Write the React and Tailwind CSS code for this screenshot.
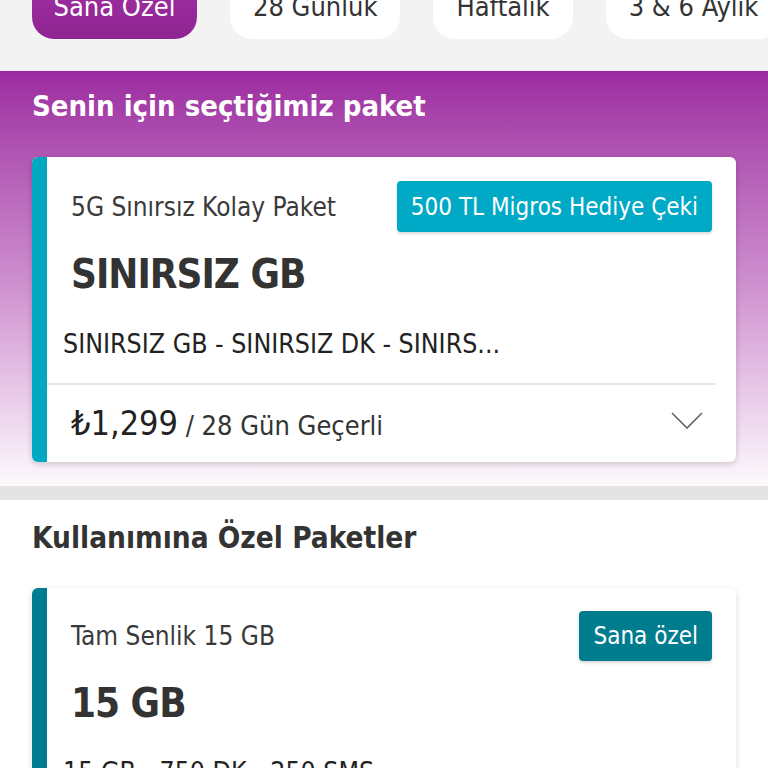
const tabs = ['Sana Özel', '28 Günlük', 'Haftalık', '3 & 6 Aylık'];

function Chevron() {
  return (
    <svg className="mb-[12px]" width="34" height="20" viewBox="0 0 34 20" fill="none" stroke="#666" strokeWidth="1.6">
      <polyline points="2,2 17,17 32,2" />
    </svg>
  );
}

export default function App() {
  return (
    <div className="w-full bg-white text-[#333]" style={{ fontFamily: '"DejaVu Sans Condensed", "Liberation Sans", sans-serif' }}>
      {/* tabs */}
      <div className="h-[71px] overflow-hidden border-b border-[#ebe9f2] bg-[#f3f3f3]">
        <div className="-mt-[24px] flex gap-[33px] pl-[32px] whitespace-nowrap">
          {tabs.map((t, i) => (
            <div
              key={t}
              className={
                i === 0
                  ? 'flex h-[63px] w-[165px] shrink-0 items-center justify-center rounded-[22px] bg-gradient-to-b from-[#a12ea3] to-[#8e2591] text-[27px] text-white'
                  : 'flex h-[63px] shrink-0 items-center justify-center rounded-[22px] bg-white px-[23px] text-[27px] text-[#333]'
              }
            >
              {t}
            </div>
          ))}
        </div>
      </div>

      {/* recommended */}
      <section className="bg-gradient-to-b from-[#9c2aa0] via-[#cd8dce] to-[#fdfafd] px-[32px] pb-[24px] pt-[15px]">
        <h1 className="text-[29px] font-bold leading-[40px] text-white">Senin için seçtiğimiz paket</h1>
        <div className="mt-[31px] flex h-[305px] overflow-hidden rounded-[6px] bg-white shadow-[0_2px_6px_rgba(0,0,0,0.18)]">
          <div className="w-[15px] shrink-0 bg-[#00a8c2]" />
          <div className="flex flex-1 flex-col">
            <div className="flex items-start justify-between pl-[24px] pr-[24px] pt-[24px]">
              <span className="mt-[11px] text-[26px] leading-[30px] text-[#3a3a3a]">5G Sınırsız Kolay Paket</span>
              <span className="flex h-[51px] items-center rounded-[4px] bg-[#00a9c6] px-[14px] text-[24px] text-white shadow-[0_2px_3px_rgba(0,0,0,0.15)]">
                500 TL Migros Hediye Çeki
              </span>
            </div>
            <div className="pl-[24px] pt-[17px] text-[40px] font-bold leading-[50px] tracking-[-1px] text-[#333]">SINIRSIZ GB</div>
            <div className="pl-[16px] pt-[28px] text-[26.5px] leading-[34px] text-[#222]">SINIRSIZ GB - SINIRSIZ DK - SINIRS...</div>
            <div className="mr-[20px] mt-[22px] h-[2px] bg-[#e6e6e6]" />
            <div className="flex items-center justify-between pl-[24px] pr-[32px] pt-[18px]">
              <span className="leading-[40px]">
                <span className="text-[34px] text-[#222]">₺1,299</span>
                <span className="text-[27px] text-[#333]"> / 28 Gün Geçerli</span>
              </span>
              <Chevron />
            </div>
          </div>
        </div>
      </section>

      <div className="h-[14px] bg-[#e4e4e4]" />

      {/* usage packages */}
      <section className="px-[32px] pt-[18px]">
        <h2 className="text-[29.5px] font-bold leading-[40px] text-[#333]">Kullanımına Özel Paketler</h2>
        <div className="mt-[30px] flex h-[260px] overflow-hidden rounded-t-[6px] bg-white shadow-[0_2px_6px_rgba(0,0,0,0.15)]">
          <div className="w-[15px] shrink-0 bg-[#007c92]" />
          <div className="flex flex-1 flex-col">
            <div className="flex items-start justify-between pl-[24px] pr-[24px] pt-[23px]">
              <span className="mt-[10px] text-[26px] leading-[30px] text-[#3a3a3a]">Tam Senlik 15 GB</span>
              <span className="flex h-[50px] items-center rounded-[4px] bg-[#007c8f] px-[14px] text-[24px] text-white shadow-[0_2px_3px_rgba(0,0,0,0.15)]">
                Sana özel
              </span>
            </div>
            <div className="pl-[24px] pt-[17px] text-[40px] font-bold leading-[50px] tracking-[-1px] text-[#333]">15 GB</div>
            <div className="pl-[16px] pt-[27px] text-[26.5px] leading-[34px] text-[#222]">15 GB - 750 DK - 250 SMS</div>
          </div>
        </div>
      </section>
    </div>
  );
}
